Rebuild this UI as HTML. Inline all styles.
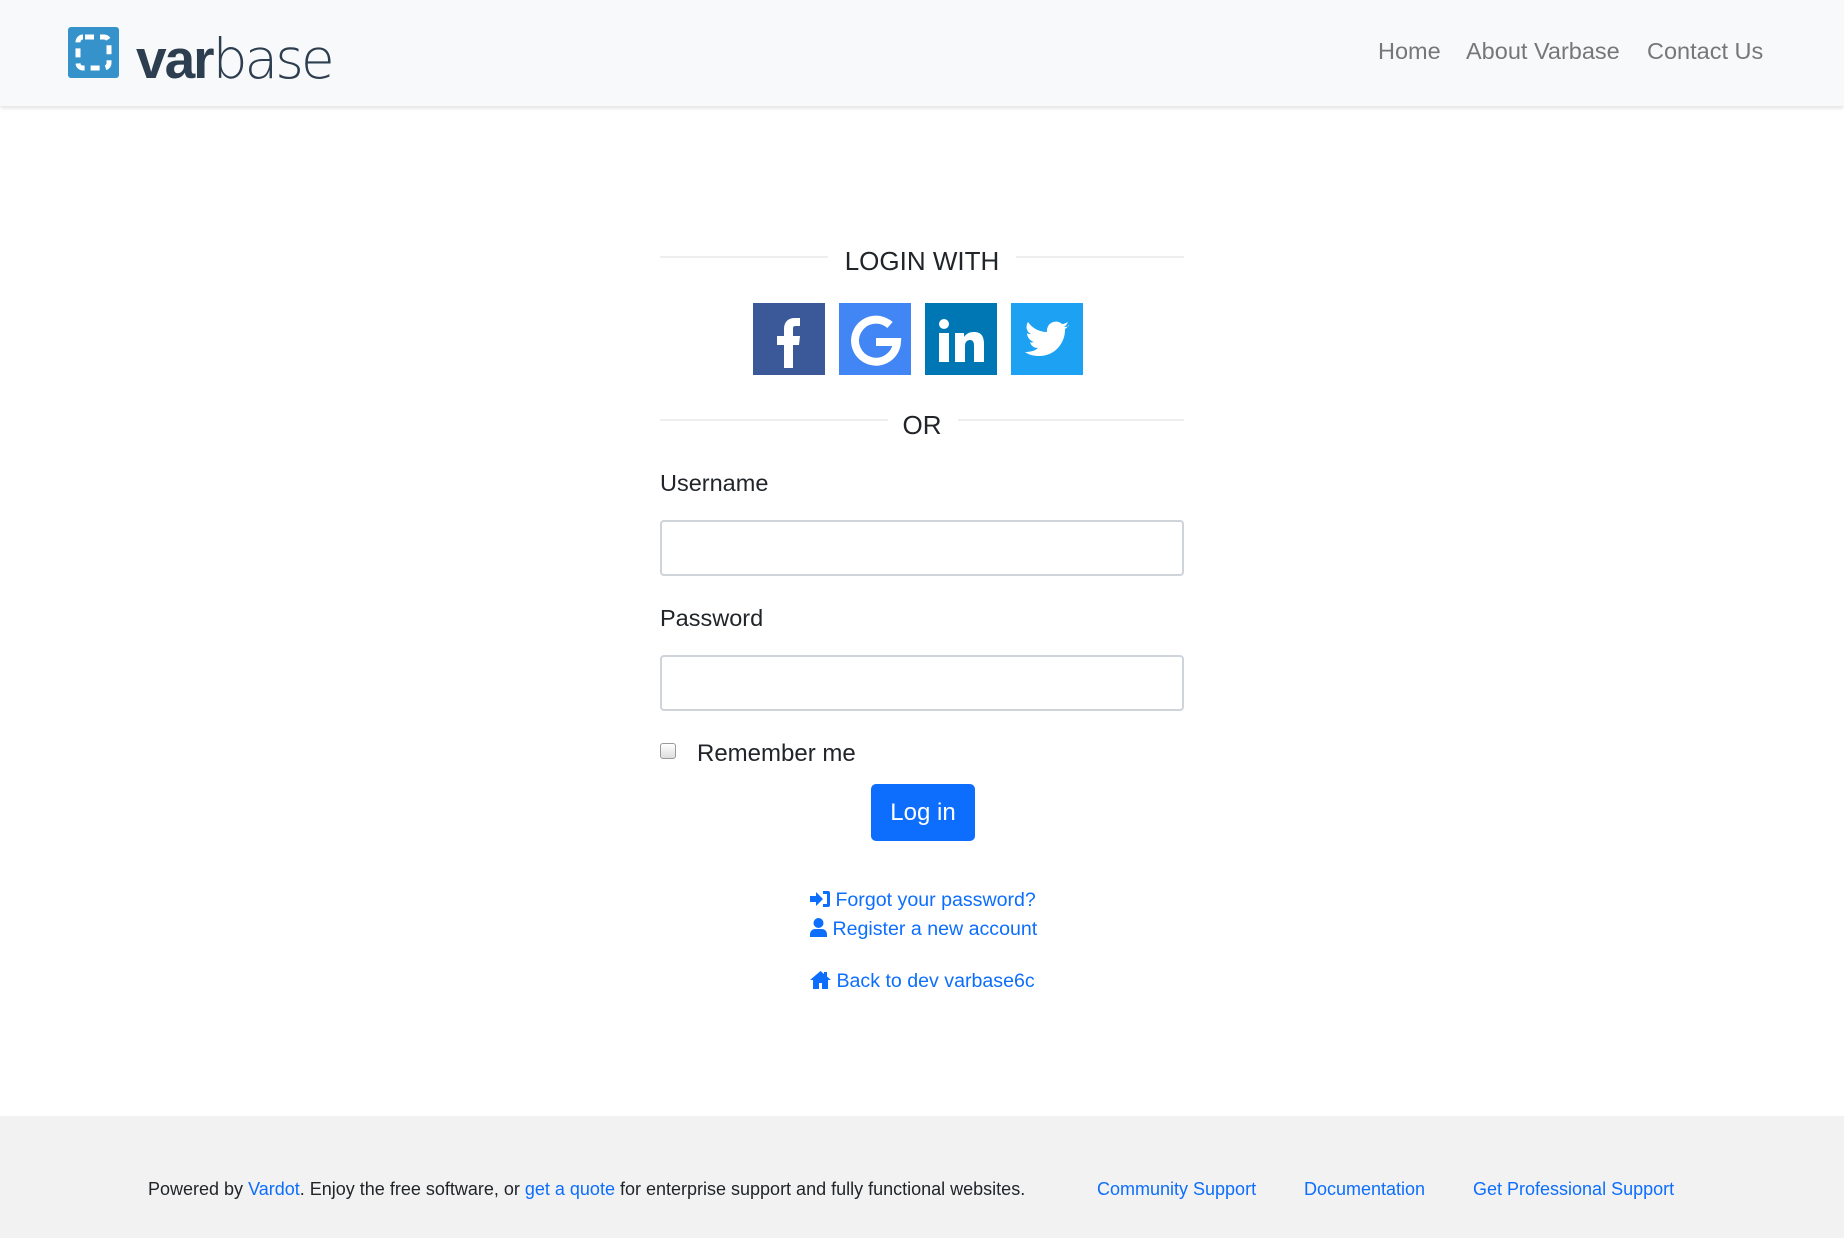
<!DOCTYPE html>
<html><head><meta charset="utf-8"><style>
*{box-sizing:border-box;margin:0;padding:0}
body{width:1844px;height:1238px;background:#fff;font-family:"Liberation Sans",Arial,sans-serif;position:relative;overflow:hidden;color:#212529}
.a{position:absolute;white-space:nowrap}
header{position:absolute;left:0;top:0;width:1844px;height:106px;background:#f8f9fa;box-shadow:0 2px 4px rgba(0,0,0,.12)}
.nav{font-size:23.5px;color:#777;top:38px}
.line{position:absolute;height:2px;background:#eceeef}
.soc{position:absolute;top:303px;width:72px;height:72px}
label{font-size:23.5px}
.inp{position:absolute;left:660px;width:524px;height:56px;border:2px solid #ced4da;border-radius:4px;background:#fff}
.lnk{color:#0d6efd;font-size:19.6px}
footer{position:absolute;left:0;top:1116px;width:1844px;height:122px;background:#f2f2f2}
.f{font-size:18px;top:1179px}
.f a{color:#0d6efd;text-decoration:none}
</style></head><body>
<header>
<svg class="a" style="left:68px;top:27px" width="51" height="51" viewBox="0 0 51 51"><rect width="51" height="51" rx="3" fill="#3592cb"/><rect x="10" y="10" width="31" height="31" rx="5" fill="none" stroke="#fff" stroke-width="5" stroke-dasharray="9 6" stroke-dashoffset="-2"/></svg>
<div class="a" style="left:136px;top:19px;font-size:55px;letter-spacing:-2px;color:#2c3e50;line-height:80px"><b>var</b><span style="font-family:'DejaVu Sans','Liberation Sans',sans-serif;font-weight:200;letter-spacing:-3px">base</span></div>
<div class="a nav" style="left:1378px">Home</div>
<div class="a nav" style="left:1466px">About Varbase</div>
<div class="a nav" style="left:1647px">Contact Us</div>
</header>

<div class="line" style="left:660px;top:256px;width:168px"></div>
<div class="line" style="left:1016px;top:256px;width:168px"></div>
<div class="a" style="left:660px;width:524px;text-align:center;top:246px;font-size:26px">LOGIN WITH</div>

<svg class="soc" style="left:753px" viewBox="0 0 72 72"><rect width="72" height="72" fill="#3b5998"/><path d="M31 65V42h-7v-9h7v-7c0-7 4-11 11-11h5v8h-4c-3 0-3 1-3 4v6h7l-1 9h-6v23z" fill="#fff"/></svg>
<svg class="soc" style="left:839px" viewBox="0 0 72 72"><rect width="72" height="72" fill="#4285f4"/><path d="M51 22a21 21 0 1 0 7 17H37" fill="none" stroke="#fff" stroke-width="8"/></svg>
<svg class="soc" style="left:925px" viewBox="0 0 72 72"><rect width="72" height="72" fill="#0077b5"/><circle cx="19" cy="21" r="5" fill="#fff"/><rect x="14" y="30" width="10" height="29" fill="#fff"/><path d="M30 30h9v4c2-3 5-5 10-5 7 0 10 4 10 12v18h-10V43c0-4-1-6-4-6s-5 2-5 6v16H30z" fill="#fff"/></svg>
<svg class="soc" style="left:1011px" viewBox="0 0 72 72"><rect width="72" height="72" fill="#1da1f2"/><path d="M58 23c-2 1-4 1-5 1 2-1 3-3 4-5-2 1-4 2-6 2a9 9 0 0 0-15 8c-8 0-15-4-19-10-3 5-1 10 3 12-2 0-3 0-4-1 0 4 3 8 7 9-1 0-3 1-4 0 1 4 4 6 8 6-3 3-8 4-13 4 4 3 9 4 14 4 17 0 26-14 26-26v-1c2-1 3-3 4-4z" fill="#fff"/></svg>

<div class="line" style="left:660px;top:419px;width:228px"></div>
<div class="line" style="left:958px;top:419px;width:226px"></div>
<div class="a" style="left:660px;width:524px;text-align:center;top:410px;font-size:26px">OR</div>

<label class="a" style="left:660px;top:470px">Username</label>
<div class="inp" style="top:520px"></div>
<label class="a" style="left:660px;top:605px">Password</label>
<div class="inp" style="top:655px"></div>
<div class="a" style="left:660px;top:743px;width:16px;height:16px;border:1px solid #999;border-radius:3px;background:linear-gradient(#fff,#ddd)"></div>
<div class="a" style="left:697px;top:740px;font-size:24px">Remember me</div>
<div class="a" style="left:871px;top:784px;width:104px;height:57px;background:#0d6efd;border-radius:5px;color:#fff;font-size:24px;text-align:center;line-height:57px">Log in</div>

<div class="a lnk" style="left:810px;top:889px"><svg width="20" height="16" viewBox="0 0 20 16" style="vertical-align:-1px"><path d="M0 5h6V1l7 7-7 7v-4H0z M13 0h5a2 2 0 0 1 2 2v12a2 2 0 0 1-2 2h-5v-3h4V3h-4z" fill="#0d6efd"/></svg> Forgot your password?</div>
<div class="a lnk" style="left:810px;top:918px"><svg width="17" height="19" viewBox="0 0 17 19" style="vertical-align:-2px"><circle cx="8.5" cy="5" r="5" fill="#0d6efd"/><path d="M0 19v-3a5 5 0 0 1 5-5h7a5 5 0 0 1 5 5v3z" fill="#0d6efd"/></svg> Register a new account</div>
<div class="a lnk" style="left:810px;top:970px"><svg width="21" height="18" viewBox="0 0 21 18" style="vertical-align:-2px"><path d="M10.5 0L0 9h3v9h6v-6h3v6h6V9h3L17 5.5V1h-3v2z" fill="#0d6efd"/></svg> Back to dev varbase6c</div>

<footer></footer>
<div class="a f" style="left:148px">Powered by <a>Vardot</a>. Enjoy the free software, or <a>get a quote</a> for enterprise support and fully functional websites.</div>
<div class="a f" style="left:1097px"><a>Community Support</a></div>
<div class="a f" style="left:1304px"><a>Documentation</a></div>
<div class="a f" style="left:1473px"><a>Get Professional Support</a></div>
</body></html>
